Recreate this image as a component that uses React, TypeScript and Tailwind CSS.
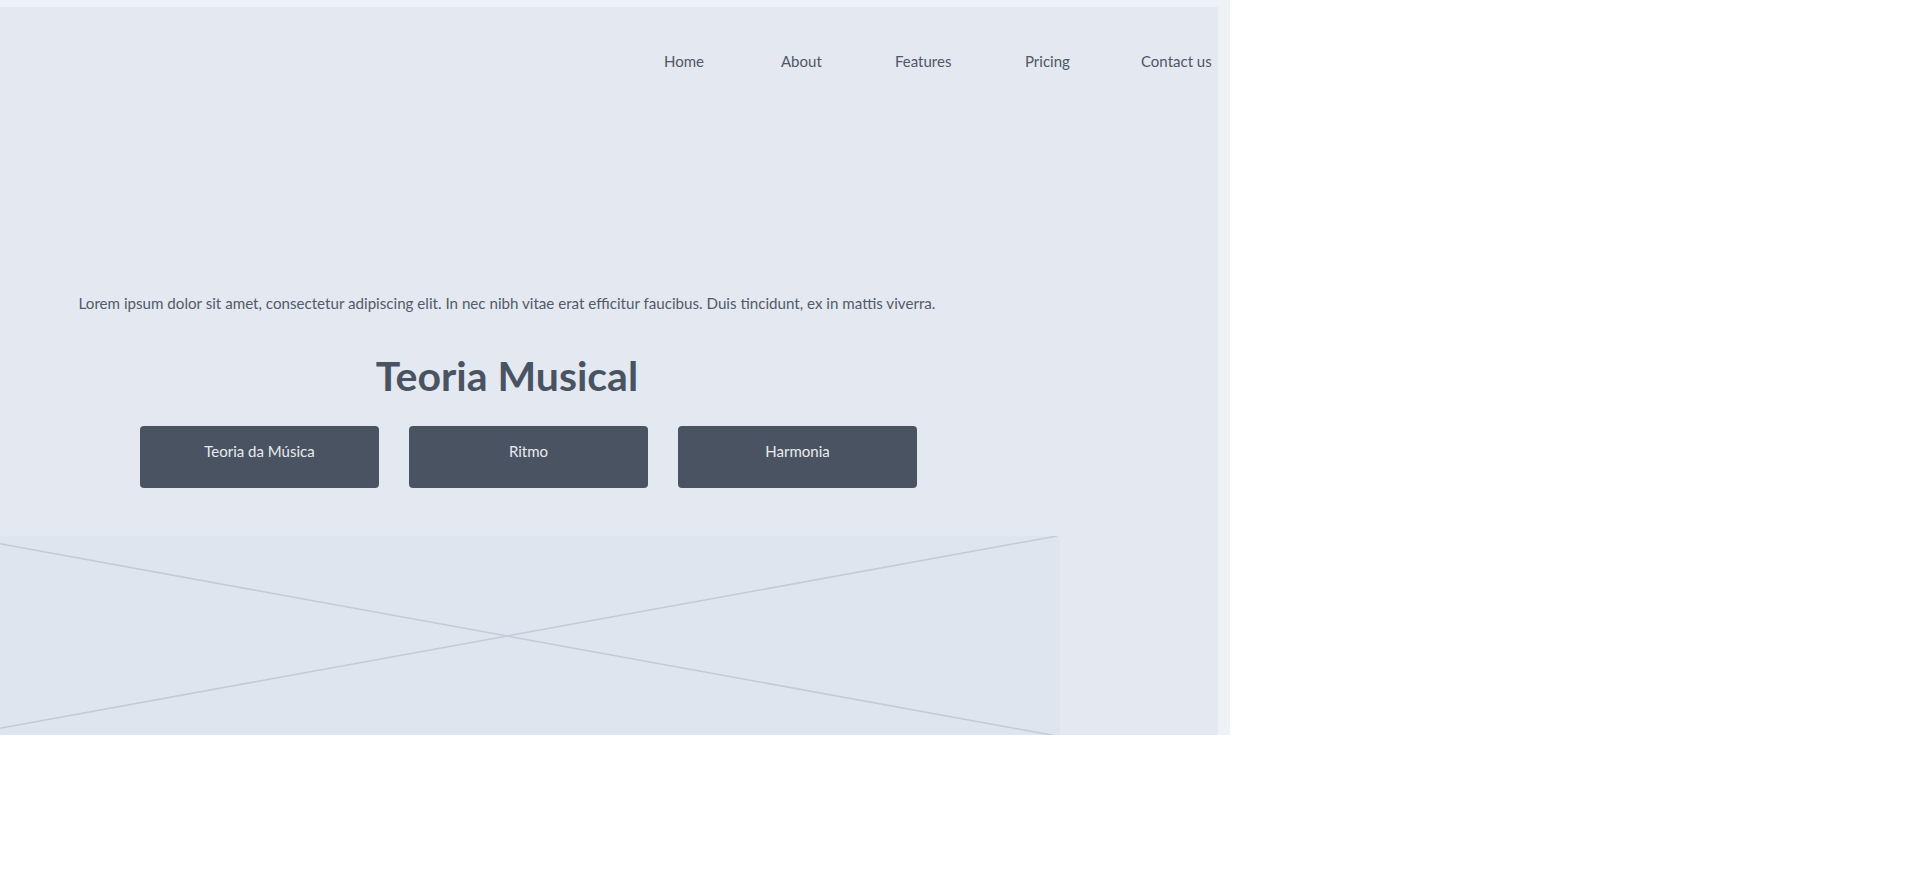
import React from "react";

// each nav item sits in a box whose width is the distance to the next one
const navItems = [
  { label: "Home", w: "w-[117px]" },
  { label: "About", w: "w-[114px]" },
  { label: "Features", w: "w-[130px]" },
  { label: "Pricing", w: "w-[116px]" },
  { label: "Contact us", w: "" },
];
const topics = ["Teoria da Música", "Ritmo", "Harmonia"];

const ImagePlaceholder = () => {
  return (
    <div className="relative w-[1103px] h-[200px] ml-[-43px] mt-[48px] bg-[#dfe5ee]">
      <svg
        className="absolute left-0 top-0"
        width="1100"
        height="200"
        viewBox="0 0 1100 200"
        preserveAspectRatio="none"
      >
        <line x1="0" y1="0" x2="1100" y2="200" stroke="#c3cbd8" strokeWidth="1.5" />
        <line x1="0" y1="200" x2="1100" y2="0" stroke="#c3cbd8" strokeWidth="1.5" />
      </svg>
    </div>
  );
};

export default function App() {
  return (
    <div
      className="w-[1914px] h-[873px] bg-white"
      style={{ fontFamily: "Lato, 'Open Sans', sans-serif" }}
    >
      <div className="w-[1230px] h-[735px] bg-[#eef1f6] pt-[7px] pr-[12px]">
        <div className="h-full bg-[#e4e8f1] overflow-hidden">
          <nav className="flex pl-[664px] pt-[43px] text-[15px] leading-[22px] text-[#4f5765]">
            {navItems.map((item) => (
              <a key={item.label} href="#" className={`whitespace-nowrap shrink-0 ${item.w}`}>
                {item.label}
              </a>
            ))}
          </nav>

          <div className="w-[1100px] ml-[-43px]">
            <p className="mt-[221px] text-center text-[15.15px] leading-[20px] text-[#525a68]">
              Lorem ipsum dolor sit amet, consectetur adipiscing elit. In nec nibh vitae erat
              efficitur faucibus. Duis tincidunt, ex in mattis viverra.
            </p>
            <h1 className="mt-[38px] text-center text-[41px] leading-[50px] font-bold text-[#4a5361]">
              Teoria Musical
            </h1>
            <div className="flex gap-[30px] pl-[183px] mt-[25px]">
              {topics.map((t) => (
                <button
                  key={t}
                  className="w-[239px] h-[62px] pt-[14px] rounded-[4px] bg-[#4a5361] text-[15px] leading-[22px] text-[#e8ebf0] flex justify-center items-start"
                >
                  {t}
                </button>
              ))}
            </div>
          </div>

          <ImagePlaceholder />
        </div>
      </div>
    </div>
  );
}
